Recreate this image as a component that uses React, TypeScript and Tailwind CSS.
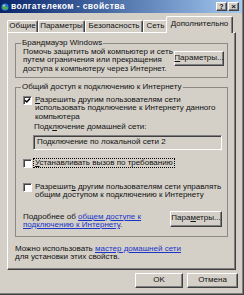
import React from "react";

function Btn({ children, className = "" }: { children: React.ReactNode; className?: string }) {
  return (
    <div
      className={`flex items-center justify-center bg-[#d4d0c8] border border-t-white border-l-white border-r-[#404040] border-b-[#404040] shadow-[inset_-1px_-1px_0_#808080] ${className}`}
    >
      {children}
    </div>
  );
}

function Check({ checked = false }: { checked?: boolean }) {
  return (
    <span className="shrink-0 w-[9px] h-[9px] bg-white border border-t-[#808080] border-l-[#808080] border-r-white border-b-white shadow-[inset_1px_1px_0_#404040] flex items-center justify-center">
      {checked && (
        <svg width="7" height="7" viewBox="0 0 7 7">
          <path d="M1 3.2 L2.8 5 L6 1.6" stroke="#000" strokeWidth="1.5" fill="none" />
        </svg>
      )}
    </span>
  );
}

function Link({ children }: { children: React.ReactNode }) {
  return <span className="text-[#1a34c8] underline">{children}</span>;
}

const tabs = [
  { label: "Общие", w: "w-[31px]" },
  { label: "Параметры", w: "w-[47px]" },
  { label: "Безопасность", w: "w-[58px]" },
  { label: "Сеть", w: "w-[25px]" },
];

export default function App() {
  return (
    <div className="w-[244px] h-[295px] overflow-hidden bg-[#d4d0c8] border-r border-b border-[#404040] font-['Liberation_Sans',Arial,sans-serif] text-[8px] leading-[8.5px] text-[#111]">
      <div className="h-full flex flex-col border-r border-b border-[#808080]">
        {/* title bar */}
        <div className="h-[13px] shrink-0 flex items-center gap-[2px] pl-[1px] pr-[3px] bg-linear-to-r from-[#0a246a] to-[#a6caf0]">
          <svg width="8" height="8" viewBox="0 0 8 8">
            <circle cx="4" cy="4" r="3.6" fill="#2f7fc8" />
            <path d="M1 3 Q3 1.5 4 3 T7 4 L6.5 6 Q4 7 2 6 Z" fill="#4caf50" />
            <circle cx="3" cy="2.6" r="1" fill="#bfe4ff" opacity="0.8" />
          </svg>
          <span className="text-white font-bold text-[8.5px] tracking-[0.4px]">волгателеком - свойства</span>
          <div className="ml-auto flex gap-[1px]">
            <Btn className="w-[11px] h-[9px] text-[7px] font-bold leading-none">?</Btn>
            <Btn className="w-[11px] h-[9px] text-[8px] font-bold leading-none">×</Btn>
          </div>
        </div>

        {/* tabs */}
        <div className="mt-[3px] h-[16px] flex items-end pl-[7px] shrink-0">
          {tabs.map((t) => (
            <div
              key={t.label}
              className={`${t.w} h-[12px] flex items-center justify-center rounded-t-[2px] border-t border-l border-r border-t-white border-l-white border-r-[#404040] shadow-[inset_-1px_0_0_#808080] whitespace-nowrap`}
            >
              {t.label}
            </div>
          ))}
          <div className="relative z-10 -ml-[2px] -mb-px w-[67px] h-[17px] flex items-start pt-[3px] justify-center rounded-t-[2px] bg-[#d4d0c8] border-t border-l border-r border-t-white border-l-white border-r-[#404040] shadow-[inset_-1px_0_0_#808080] whitespace-nowrap">
            Дополнительно
          </div>
        </div>

        {/* panel */}
        <div className="ml-[7px] w-[229px] h-[238px] shrink-0 flex flex-col border border-t-white border-l-white border-r-[#404040] border-b-[#404040] shadow-[inset_-1px_-1px_0_#808080] pt-[6px] pl-[7px] pr-[7px]">
          <fieldset className="border border-[#8c8983] pl-[7px] pr-[3px] pb-[4px]">
            <legend className="-ml-[2px] px-[1px]">Брандмауэр Windows</legend>
            <div className="flex items-start">
              <p className="whitespace-nowrap">
                Помочь защитить мой компьютер и сеть
                <br />
                путем ограничения или прекращения
                <br />
                доступа к компьютеру через Интернет.
              </p>
              <Btn className="ml-auto mt-[3px] w-[50px] h-[15px]">
                <span>
                  <span className="underline">П</span>араметры...
                </span>
              </Btn>
            </div>
          </fieldset>

          <fieldset className="mt-[5px] border border-[#8c8983] pl-[7px] pr-[5px] pb-[6px]">
            <legend className="-ml-[2px] px-[1px]">Общий доступ к подключению к Интернету</legend>
            <div className="mt-[4px] flex items-start gap-[3px]">
              <Check checked />
              <p className="whitespace-nowrap">
                <span className="underline">Р</span>азрешить другим пользователям сети
                <br />
                использовать подключение к Интернету данного
                <br />
                компьютера
              </p>
            </div>
            <div className="ml-[11px] mt-[2px]">
              Подк<span className="underline">л</span>ючение домашней сети:
            </div>
            <div className="ml-[10px] mt-[3px] h-[15px] flex items-center pl-[3px] border border-t-[#808080] border-l-[#808080] border-r-white border-b-white shadow-[inset_1px_1px_0_#404040] bg-[#d4d0c8] whitespace-nowrap">
              Подключение по локальной сети 2
            </div>
            <div className="mt-[9px] flex items-center gap-[2px]">
              <Check />
              <span className="px-[1px] outline-1 outline-dotted outline-black whitespace-nowrap">
                <span className="underline">У</span>станавливать вызов по требованию
              </span>
            </div>
            <div className="mt-[15px] flex items-start gap-[3px]">
              <Check />
              <p className="whitespace-nowrap">
                Разрешит<span className="underline">ь</span> другим пользователям сети управлять
                <br />
                общим доступом к подключению к Интернету
              </p>
            </div>
            <div className="mt-[11px] flex items-start">
              <p className="whitespace-nowrap pt-[2px]">
                Подробнее об <Link>общем доступе к</Link>
                <br />
                <Link>подключению к Интернету</Link>.
              </p>
              <Btn className="ml-auto w-[52px] h-[16px]">
                <span>
                  Пара<span className="underline">м</span>етры...
                </span>
              </Btn>
            </div>
          </fieldset>

          <p className="mt-[8px] whitespace-nowrap">
            Можно использовать <Link>мастер домашней сети</Link>
            <br />
            для установки этих свойств.
          </p>
        </div>

        {/* buttons */}
        <div className="mt-[3px] flex gap-[4px] justify-end pr-[4px]">
          <Btn className="w-[48px] h-[15px]">OK</Btn>
          <Btn className="w-[51px] h-[15px]">Отмена</Btn>
        </div>
      </div>
    </div>
  );
}
